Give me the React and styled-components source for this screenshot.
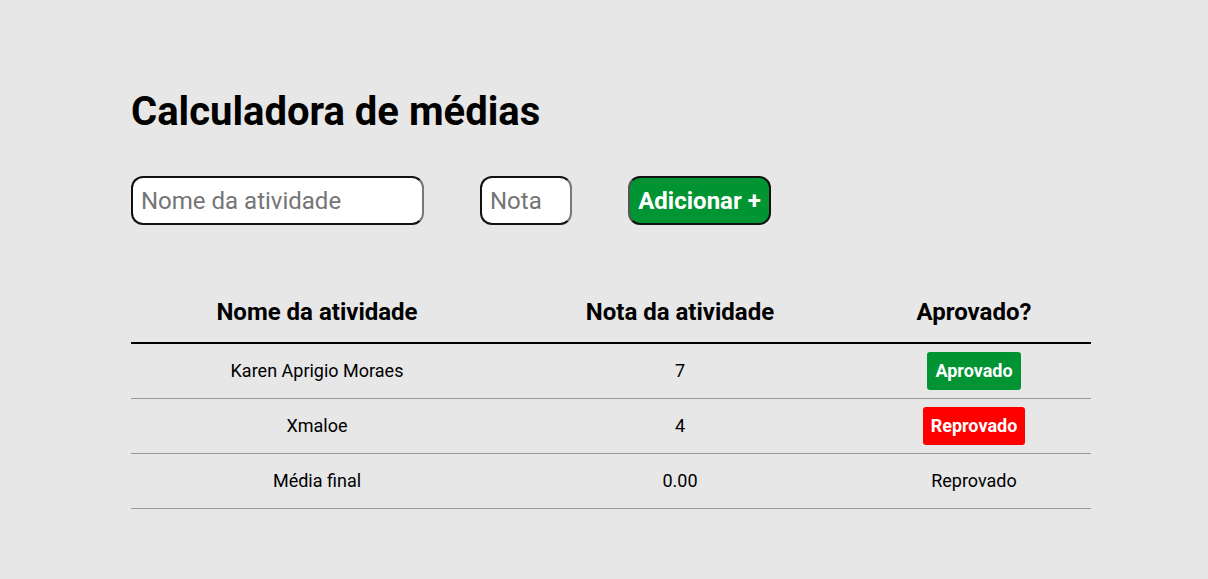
import styled, { createGlobalStyle } from "styled-components";

const GlobalStyle = createGlobalStyle`
  * {
    margin: 0;
    padding: 0;
    box-sizing: border-box;
  }

  body {
    padding-left: 14px;
    background-color: #e7e7e7;
    font-family: Roboto, sans-serif;
  }
`;

const Container = styled.div`
  width: 960px;
  margin: 0 auto;
  padding-top: 88px;
`;

const Title = styled.h1`
  font-size: 40px;
  font-weight: 700;
  line-height: 48px;
  color: #000;
`;

const Form = styled.form`
  display: flex;
  align-items: center;
  gap: 56px;
  margin-top: 40px;
`;

const Input = styled.input`
  width: ${({ $width }) => $width}px;
  height: 49px;
  padding: 0 8px;
  font-family: Roboto, sans-serif;
  font-size: 24px;
  background-color: #fff;
  border: 2px solid #111;
  border-right-color: #777;
  border-radius: 12px;

  &::placeholder {
    color: #757575;
  }
`;

const Button = styled.button`
  height: 49px;
  width: 143px;
  font-family: Roboto, sans-serif;
  font-size: 24px;
  font-weight: 700;
  color: #fff;
  background-color: #009432;
  border: 2px solid #111;
  border-left-color: #555;
  border-radius: 12px;
`;

const Table = styled.table`
  width: 100%;
  margin-top: 58px;
  border-collapse: collapse;
  font-size: 18px;
`;

const HeadCell = styled.th`
  width: ${({ $width }) => $width}px;
  height: 60px;
  padding-bottom: 2px;
  font-size: 24px;
  font-weight: 700;
  text-align: center;
  border-bottom: 2px solid #000;
`;

const Row = styled.tr`
  border-bottom: 1px solid #999;
`;

const Cell = styled.td`
  height: 55px;
  text-align: center;
  vertical-align: middle;
`;

const Badge = styled.span`
  display: inline-block;
  padding: 8px 8px;
  font-size: 18px;
  font-weight: 700;
  line-height: 22px;
  color: #fff;
  border-radius: 3px;
  background-color: ${({ $approved }) => ($approved ? "#009432" : "#ff0000")};
`;

const activities = [
  { name: "Karen Aprigio Moraes", grade: 7 },
  { name: "Xmaloe", grade: 4 },
];

export default function App() {
  return (
    <>
      <GlobalStyle />
      <Container>
        <Title>Calculadora de médias</Title>
        <Form onSubmit={(e) => e.preventDefault()}>
          <Input $width={293} type="text" placeholder="Nome da atividade" />
          <Input $width={92} type="number" placeholder="Nota" />
          <Button type="submit">Adicionar +</Button>
        </Form>
        <Table>
          <thead>
            <tr>
              <HeadCell $width={372}>Nome da atividade</HeadCell>
              <HeadCell $width={354}>Nota da atividade</HeadCell>
              <HeadCell $width={234}>Aprovado?</HeadCell>
            </tr>
          </thead>
          <tbody>
            {activities.map((activity) => (
              <Row key={activity.name}>
                <Cell>{activity.name}</Cell>
                <Cell>{activity.grade}</Cell>
                <Cell>
                  <Badge $approved={activity.grade >= 7}>
                    {activity.grade >= 7 ? "Aprovado" : "Reprovado"}
                  </Badge>
                </Cell>
              </Row>
            ))}
          </tbody>
          <tfoot>
            <Row>
              <Cell>Média final</Cell>
              <Cell>0.00</Cell>
              <Cell>Reprovado</Cell>
            </Row>
          </tfoot>
        </Table>
      </Container>
    </>
  );
}
